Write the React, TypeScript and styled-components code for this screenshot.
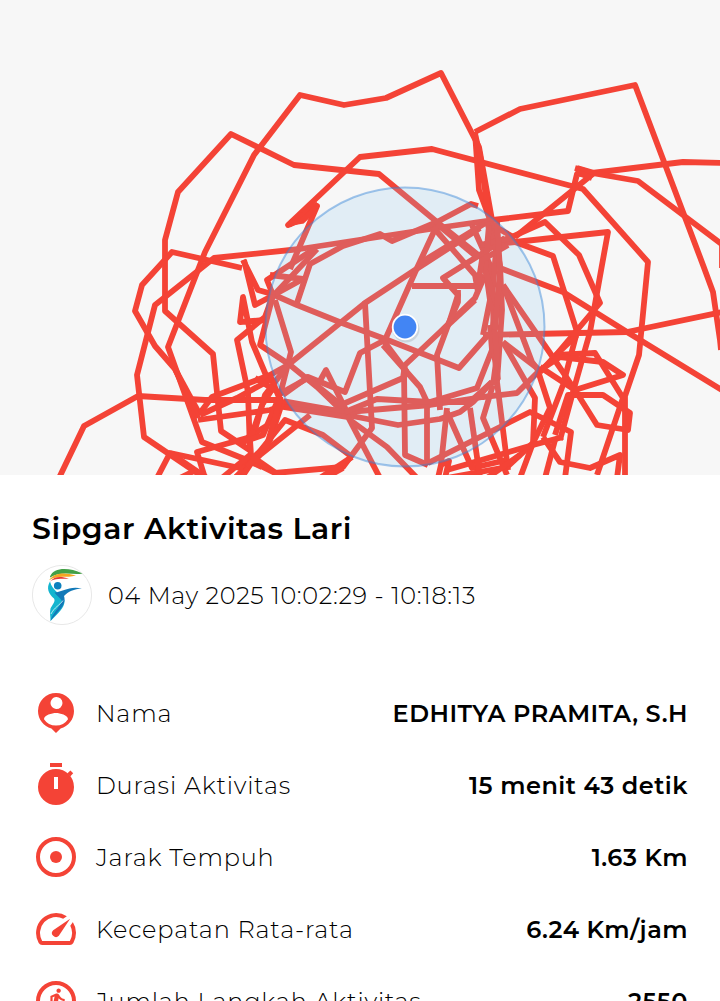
import React from "react";
import { createGlobalStyle, styled } from "styled-components";

const RED = "#f44336";

const routes = [
  "59,478 84,426 138,396 205,400 240,400 283,400",
  "251,451 221,431 213,354 165,311 165,240 178,192 231,134 294,165 379,174 437,222 487,262",
  "262,467 242,458 202,442 168,347 205,252 254,155 300,95 344,105 386,98 441,73 479,147 492,220",
  "198,418 175,369 155,346 135,311 142,285 172,252 242,268",
  "200,475 144,437 137,375 146,340 155,305 214,258 300,249 437,228 493,220 568,211 577,174 592,173 683,162 724,163",
  "200,415 175,369",
  "290,269 317,206 300,220 288,225 360,157 432,149 583,189 648,262 639,355 625,396 625,475",
  "318,204 289,225",
  "316,208 302,221 290,223",
  "273,296 317,249",
  "297,303 310,264 343,246 380,234 392,241 437,222 471,204 478,206",
  "243,260 258,290 272,294 297,305 342,323 385,339 459,368 488,335",
  "244,260 255,305 272,296 303,279 270,275",
  "273,295 267,280 314,249",
  "268,380 252,342 243,297 240,322 265,320",
  "273,295 265,317 237,340 248,392 250,451",
  "273,295 260,345 290,365 317,387 343,412",
  "275,300 291,352 280,395",
  "365,303 288,365",
  "480,228 418,268 365,303 372,428 343,467 275,473 253,462",
  "437,225 417,268 385,340 360,353 345,392 308,377 283,395",
  "347,412 326,370 316,388",
  "412,286 475,286",
  "383,345 420,387 427,402 427,465",
  "404,370 405,455 428,465",
  "283,402 347,415 398,425 440,419 460,412 473,402 492,382",
  "283,405 347,412 430,405 483,397 517,393 540,370",
  "283,401 345,412",
  "283,407 347,417",
  "305,376 345,408",
  "343,404 403,378 405,365 440,332 475,298 485,275",
  "345,412 377,399 430,402 477,388 492,350 490,325",
  "430,402 470,402 492,382",
  "347,415 380,478",
  "350,420 387,447 417,478",
  "383,340 407,372",
  "235,478 253,460 285,420 323,435 352,457",
  "310,415 260,455 235,478",
  "198,420 270,410 285,405",
  "200,413 212,397 270,375 288,365",
  "200,415 237,398 270,380",
  "283,392 308,378",
  "205,478 197,452 247,438 268,425",
  "157,478 170,453 240,468 262,450",
  "170,453 210,480",
  "180,478 194,471",
  "275,385 262,405 250,440 251,455",
  "283,400 270,440 250,465 240,480",
  "278,400 263,435 240,443",
  "270,375 280,400 267,445 247,467",
  "288,365 265,395 255,430",
  "283,395 255,378",
  "250,455 280,476",
  "222,478 250,455",
  "343,468 325,478",
  "352,457 320,478",
  "475,132 520,109 635,85 703,265 713,292 720,340 721,350",
  "722,240 722,268",
  "475,132 479,190 492,225 500,265 502,310 497,382 508,470",
  "475,134 480,155 489,217",
  "575,168 592,173 638,181 724,246",
  "577,168 594,173 515,237",
  "576,172 592,178",
  "505,240 545,222 579,255 600,303 556,355 540,372",
  "490,245 515,242 608,232 602,265 590,332 573,392 560,440",
  "515,242 553,256 577,332",
  "577,332 563,385 543,437",
  "556,355 577,335",
  "500,268 563,292 627,332 722,390",
  "483,335 627,332 722,312",
  "503,285 550,353 575,390 597,425 628,430 630,413 603,395 568,395 555,435",
  "557,355 595,353 623,398 597,475",
  "540,370 560,357 603,362 623,375 575,390 540,367",
  "503,342 537,368 550,408 533,443 520,478",
  "503,342 535,398 533,443 507,467 447,478",
  "563,437 533,445 447,470",
  "428,463 510,422 530,412 571,432 565,478",
  "543,437 560,462 590,468 620,455 617,478",
  "555,440 545,478",
  "503,285 532,362 540,372",
  "485,265 490,300 483,335",
  "447,412 472,468 507,460",
  "470,408 480,478",
  "493,385 483,418 507,475",
  "447,408 441,465 438,478",
  "505,238 483,253 443,278 458,295 450,320 437,355 440,410",
  "433,227 475,275 478,292",
  "437,224 478,258",
  "420,263 487,222 515,238",
  "472,225 490,265 494,310 492,340 498,380",
  "475,300 448,325",
  "458,290 458,302 448,325",
  "487,222 496,250 492,300 497,355 493,385",
  "480,245 515,237",
  "489,225 485,270 500,315",
  "508,245 482,260 478,285",
  "497,222 500,270 495,330",
  "440,465 449,461 445,478",
  "487,478 520,455",
];

const PersonPinIcon = () => (
  <Icon viewBox="0 0 24 24">
    <path
      fillRule="evenodd"
      d="M12 2a9 9 0 0 0-9 9c0 4.17 2.84 7.67 6.69 8.69L12 22l2.31-2.31C18.16 18.67 21 15.17 21 11a9 9 0 0 0-9-9zM12 4a3 3 0 1 1 0 5.98A3 3 0 0 1 12 4zM12 18.3a7.2 7.2 0 0 1-6-3.22c.03-2 4-3.1 6-3.1s5.97 1.1 6 3.1a7.2 7.2 0 0 1-6 3.22z"
    />
  </Icon>
);

const TimerIcon = () => (
  <Icon viewBox="0 0 24 24">
    <path fillRule="evenodd" d="M9 1h6v2H9zM12 4a9 9 0 1 0 0 18 9 9 0 0 0 0-18zM11 8h2v6h-2z" />
    <path d="M17.6 6.2l1.6-1.5 1.4 1.4-1.5 1.6z" />
  </Icon>
);

const DistanceIcon = () => (
  <Icon viewBox="0 0 24 24">
    <circle cx="12" cy="12" r="9" fill="none" stroke={RED} strokeWidth="2" />
    <circle cx="12" cy="12" r="3" />
  </Icon>
);

const SpeedIcon = () => (
  <Icon viewBox="0 0 24 24">
    <path d="M20.38 8.57l-1.23 1.85a8 8 0 0 1-.22 7.58H5.07A8 8 0 0 1 15.58 6.85l1.85-1.23A10 10 0 0 0 3.35 19a2 2 0 0 0 1.72 1h13.85a2 2 0 0 0 1.74-1 10 10 0 0 0-.27-10.44zm-9.79 6.84a2 2 0 0 0 2.83 0l5.66-8.49-8.49 5.66a2 2 0 0 0 0 2.83z" />
  </Icon>
);

const StepsIcon = () => (
  <Icon viewBox="0 0 24 24">
    <circle cx="12" cy="12" r="9" fill="none" stroke={RED} strokeWidth="2" />
    <path
      transform="translate(5.9 4.9) scale(.55)"
      d="M13.5 5.5c1.1 0 2-.9 2-2s-.9-2-2-2-2 .9-2 2 .9 2 2 2zM9.8 8.9L7 23h2.1l1.8-8 2.1 2v6h2v-7.5l-2.1-2 .6-3C14.8 12 16.8 13 19 13v-2c-1.9 0-3.5-1-4.3-2.4l-1-1.6c-.4-.6-1-1-1.7-1-.3 0-.5.1-.8.1L6 8.3V13h2V9.6l1.8-.7"
    />
  </Icon>
);

const SipgarLogo = () => (
  <Logo viewBox="0 0 60 60">
    <circle cx="30" cy="30" r="29.6" fill="#fff" stroke="#dcdcdc" strokeWidth=".7" />
    <path d="M18 11.5C22 2.500 36 2 50.500 8.500C41 10.500 30 5.500 18 12.500z" fill="#43a047" />
    <path d="M17.5 14.500C24 6.500 34 8 44 10.500C34 13.500 27 9.500 17.500 15z" fill="#f5a623" />
    <path d="M17.5 17C23 10.500 29 11.500 37 13.500C29 14.500 23 12.500 17.500 17z" fill="#e53935" />
    <path d="M18 16.500C14 23 16.500 29 22 33.500C24 36.500 20 40 18.500 43.500C17.500 48 18.500 51 18.500 56C25 49 33 43 32.500 35.500C30 29 20 26 18 16.500z" fill="#14b5cf" />
    <path d="M22.500 27.500C31 27 37 20.500 50 23.500C42 24 36 26.500 32 31C35 40 26 46 18.500 56C20 49 27 43 30 36C28.500 33 25 31 22.500 27.500z" fill="#1279b8" />
    <path d="M31 35.500C28 40 22 42.500 19 49" fill="none" stroke="#fff" strokeWidth=".7" />
    <circle cx="25.7" cy="20.8" r="3.8" fill="#0c80be" />
  </Logo>
);

interface IDetailRow {
  icon: React.ReactNode;
  label: string;
  value: string;
}

const details: IDetailRow[] = [
  { icon: <PersonPinIcon />, label: "Nama", value: "EDHITYA PRAMITA, S.H" },
  {
    icon: <TimerIcon />,
    label: "Durasi Aktivitas",
    value: "15 menit 43 detik",
  },
  { icon: <DistanceIcon />, label: "Jarak Tempuh", value: "1.63 Km" },
  { icon: <SpeedIcon />, label: "Kecepatan Rata-rata", value: "6.24 Km/jam" },
  { icon: <StepsIcon />, label: "Jumlah Langkah Aktivitas", value: "2550" },
];

const RouteMap = () => (
  <StyledMap viewBox="0 0 720 475">
    <g fill="none" stroke={RED} strokeWidth="5.8" strokeLinejoin="round">
      {routes.map((points, index) => (
        <polyline key={index} points={points} />
      ))}
    </g>
    <circle
      cx="405"
      cy="327"
      r="139.5"
      fill="rgba(140, 200, 240, 0.2)"
      stroke="rgba(50, 130, 215, 0.45)"
      strokeWidth="2"
    />
    <circle cx="406" cy="329" r="13.5" fill="rgba(0, 0, 0, 0.1)" />
    <circle cx="405" cy="327" r="13.2" fill="#fff" />
    <circle cx="405" cy="327" r="11.4" fill="#4285f4" />
  </StyledMap>
);

const App = () => {
  return (
    <StyledPage>
      <GlobalStyle />
      <RouteMap />
      <Content>
        <Title>Sipgar Aktivitas Lari</Title>
        <DateWrap>
          <SipgarLogo />
          <DateText>04 May 2025 10:02:29 - 10:18:13</DateText>
        </DateWrap>
        <DetailList>
          {details.map((detail) => (
            <DetailRow key={detail.label}>
              {detail.icon}
              <Label>{detail.label}</Label>
              <Value>{detail.value}</Value>
            </DetailRow>
          ))}
        </DetailList>
      </Content>
    </StyledPage>
  );
};

export default App;

const GlobalStyle = createGlobalStyle`
  body {
    margin: 0;
    background: #fff;
    overflow: hidden;
  }
`;
const StyledPage = styled.div`
  width: 720px;
  height: 1001px;
  overflow: hidden;
  background: #fff;
  color: #000;
  font-family: Montserrat, Inter, sans-serif;
`;
const StyledMap = styled.svg`
  display: block;
  width: 720px;
  height: 475px;
  background: #f7f7f7;
`;
const Content = styled.div`
  padding: 35px 32px 0;
`;
const Title = styled.h1`
  margin: 0;
  font-size: 30px;
  font-weight: 600;
  line-height: 38px;
  letter-spacing: 0.55px;
  white-space: nowrap;
`;
const DateWrap = styled.div`
  display: flex;
  gap: 16px;
  align-items: center;
  margin-top: 17px;
`;
const Logo = styled.svg`
  width: 60px;
  height: 60px;
`;
const DateText = styled.span`
  padding-top: 2px;
  font-size: 24px;
  font-weight: 350;
  letter-spacing: 0.67px;
  line-height: 30px;
  white-space: nowrap;
`;
const DetailList = styled.div`
  margin-top: 52px;
`;
const DetailRow = styled.div`
  display: flex;
  align-items: center;
  height: 72px;
`;
const Icon = styled.svg`
  flex: none;
  width: 48px;
  height: 48px;
  fill: ${RED};
`;
const Label = styled.span`
  margin-left: 16px;
  padding-top: 2px;
  font-size: 24px;
  font-weight: 350;
  letter-spacing: 0.8px;
  line-height: 30px;
  white-space: nowrap;
`;
const Value = styled.span`
  margin-left: auto;
  padding-top: 2px;
  font-size: 24px;
  font-weight: 600;
  letter-spacing: 0.5px;
  line-height: 30px;
  white-space: nowrap;
`;
